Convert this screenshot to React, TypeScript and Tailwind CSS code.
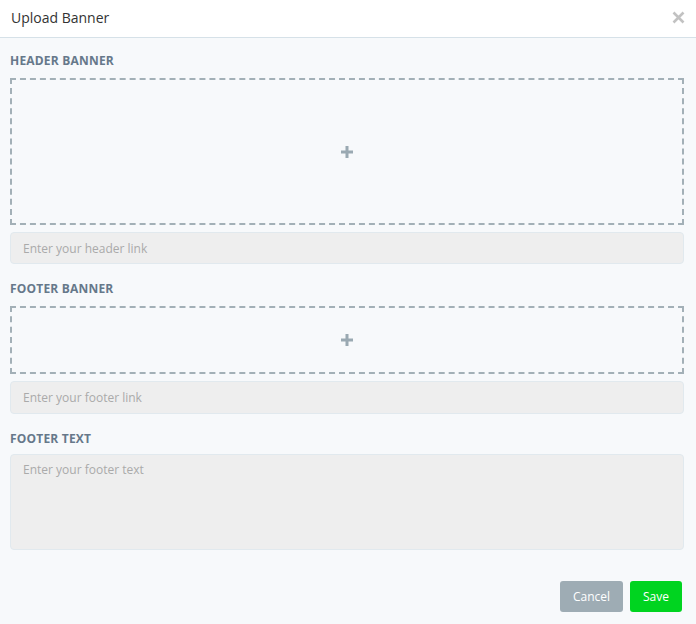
import React from "react";

const font = { fontFamily: '"Open Sans", "Noto Sans", sans-serif' };

function DropZone({ height }: { height: string }) {
  return (
    <div
      className={`mt-[9px] ${height} border-2 border-dashed border-[#a3b0b7] flex items-center justify-center`}
    >
      <svg width="12" height="12" viewBox="0 0 12 12">
        <rect x="4.5" y="0" width="3" height="12" fill="#9aa9b2" />
        <rect x="0" y="4.5" width="12" height="3" fill="#9aa9b2" />
      </svg>
    </div>
  );
}

function Label({ children, first }: { children: React.ReactNode; first?: boolean }) {
  return (
    <div
      className={`${first ? "" : "mt-[17px]"} h-4 leading-4 text-[12px] font-bold tracking-[0.2px] text-[#66788a]`}
    >
      {children}
    </div>
  );
}

export default function App() {
  return (
    <div className="w-[696px] h-[624px] flex flex-col bg-[#f7f9fb]" style={font}>
      {/* Header */}
      <div className="h-[38px] shrink-0 bg-white border-b border-[#d6e1e8] flex items-center justify-between pl-[11px] pr-[11px]">
        <h1 className="text-[14px] text-[#333] -mt-[3px]">Upload Banner</h1>
        <svg width="13" height="13" viewBox="0 0 13 13" className="-mt-[3px]">
          <path d="M1.5 1.5 L11.5 11.5 M11.5 1.5 L1.5 11.5" stroke="#c2c2c2" strokeWidth="2.6" />
        </svg>
      </div>

      {/* Body */}
      <div className="flex-1 flex flex-col pl-[10px] pr-[12px] pt-[15px]">
        <Label first>HEADER BANNER</Label>
        <DropZone height="h-[147px]" />
        <input
          className="mt-[7px] h-[32px] w-full rounded-[4px] bg-[#eeeeee] border border-[#e1e9ee] px-[12px] text-[12px] placeholder:text-[#aaaaaa] outline-none"
          placeholder="Enter your header link"
        />

        <Label>FOOTER BANNER</Label>
        <DropZone height="h-[68px]" />
        <input
          className="mt-[7px] h-[33px] w-full rounded-[4px] bg-[#eeeeee] border border-[#e1e9ee] px-[12px] text-[12px] placeholder:text-[#aaaaaa] outline-none"
          placeholder="Enter your footer link"
        />

        <Label>FOOTER TEXT</Label>
        <textarea
          className="mt-[7px] h-[96px] w-full resize-none rounded-[4px] bg-[#eeeeee] border border-[#e1e9ee] px-[12px] py-[6px] text-[12px] placeholder:text-[#aaaaaa] outline-none"
          placeholder="Enter your footer text"
        />

        <div className="mt-[31px] flex justify-end gap-[7px] pr-[2px]">
          <button className="h-[31px] w-[63px] rounded-[3px] bg-[#9eacb4] text-white text-[12px]">
            Cancel
          </button>
          <button className="h-[31px] w-[52px] rounded-[3px] bg-[#00d420] text-white text-[12px]">
            Save
          </button>
        </div>
      </div>
    </div>
  );
}
